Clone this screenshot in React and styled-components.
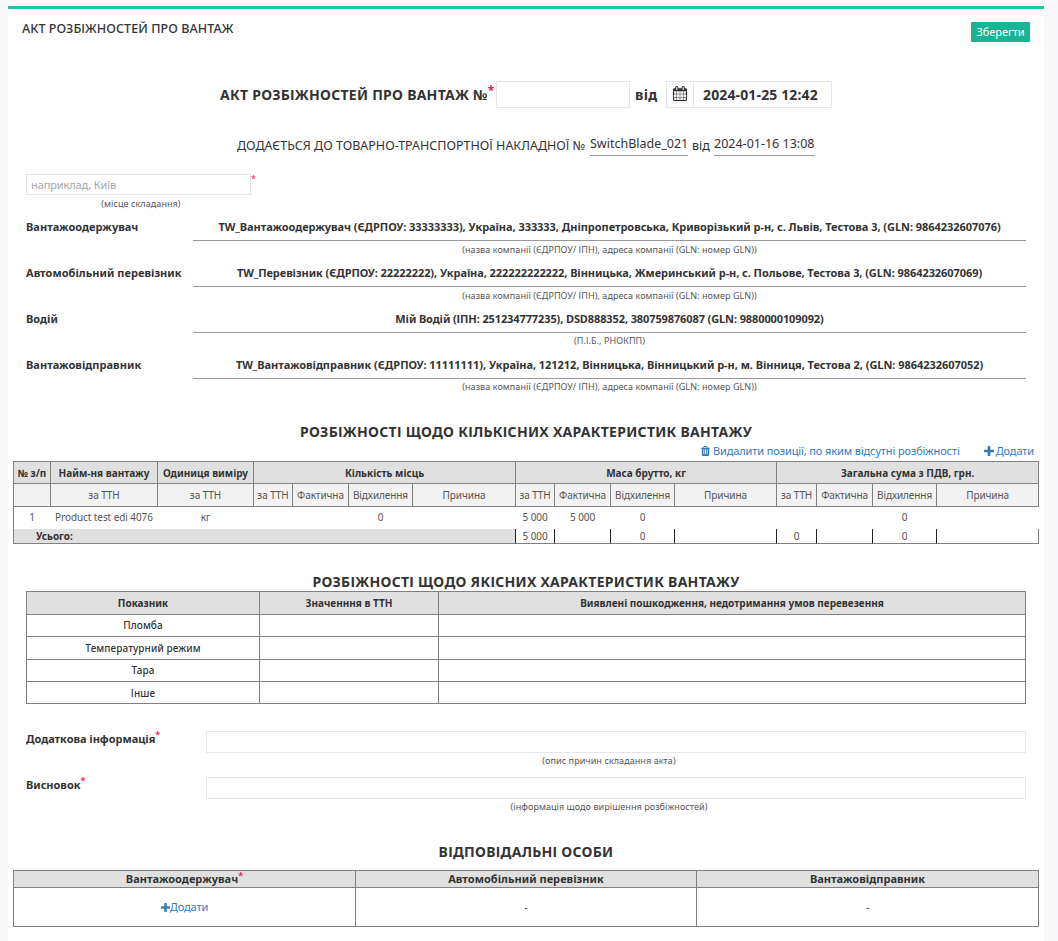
import React from "react";
import styled, { createGlobalStyle } from "styled-components";

const GlobalStyle = createGlobalStyle`
  * { box-sizing: border-box; }
  body {
    margin: 0;
    background: #f9f9fb;
    color: #333;
    font-family: "Noto Sans", "Open Sans", sans-serif;
    font-size: 11px;
  }
`;

const Page = styled.div`
  padding: 6px 14px 0 8px;
`;

const Panel = styled.main`
  height: 935px;
  background: #fff;
  border-top: 3px solid #23c6a4;
`;

const Header = styled.header`
  display: flex;
  justify-content: space-between;
  height: 72px;
  padding: 0 14px;
`;

const PageTitle = styled.h1`
  margin: 11px 0 0;
  font-size: 12.5px;
  line-height: 18px;
  font-weight: 500;
  letter-spacing: 0.08px;
`;

const SaveButton = styled.button`
  width: 59px;
  height: 20px;
  margin-top: 13px;
  padding: 0;
  border: 0;
  border-radius: 1px;
  background: #1ab394;
  color: #fff;
  font: 400 11px/20px "Noto Sans", sans-serif;
  letter-spacing: -0.05px;
`;

const ActLine = styled.div`
  display: flex;
  align-items: center;
  height: 27px;
  padding-left: 212px;
  font-size: 14px;
  font-weight: 700;
  line-height: 27px;
  white-space: nowrap;
`;

const ActLabel = styled.span`
  width: 276px;
  letter-spacing: 0.26px;
`;

const Required = styled.sup`
  color: #ed1c4f;
  font-size: ${(p) => p.$size || 9}px;
  font-weight: ${(p) => (p.$light ? 400 : 700)};
  line-height: 0;
  vertical-align: ${(p) => p.$lift ?? 5}px;
`;

const NumberInput = styled.input`
  width: 134px;
  height: 27px;
  border: 1px solid #e5e6e7;
  background: #fff;
  outline: 0;
`;

const From = styled.span`
  width: 36px;
  padding-left: 5px;
  letter-spacing: 0.3px;
`;

const DateGroup = styled.div`
  display: flex;
  width: 166px;
  height: 27px;
  border: 1px solid #e5e6e7;
  line-height: 26px;
`;

const DateAddon = styled.span`
  display: flex;
  align-items: center;
  justify-content: center;
  width: 27px;
  padding-bottom: 2px;
  border-right: 1px solid #e5e6e7;
`;

const DateValue = styled.span`
  padding-left: 9px;
  letter-spacing: 0.14px;
`;

const Waybill = styled.div`
  display: flex;
  height: 66px;
  padding: 24px 0 0 229px;
  font-size: 12.5px;
  line-height: 27px;
  white-space: nowrap;
`;

const WaybillLabel = styled.span`
  width: ${(p) => p.$width}px;
  padding-left: ${(p) => p.$inset || 0}px;
`;

const Underlined = styled.span`
  height: 24px;
  width: ${(p) => p.$width}px;
  border-bottom: 1px solid #999;
  line-height: 23px;
`;

const PlaceRow = styled.div`
  display: flex;
  height: 21px;
  padding-left: 18px;
`;

const PlaceInput = styled.input`
  width: 225px;
  height: 21px;
  padding: 0 4px;
  border: 1px solid #e5e6e7;
  outline: 0;
  font: 400 11px "Noto Sans", sans-serif;
  letter-spacing: -0.12px;
  &::placeholder { color: #a6a6a6; opacity: 1; }
`;

const PlaceMark = styled.span`
  line-height: 16px;
`;

const Caption = styled.div`
  width: ${(p) => (p.$width ? `${p.$width}px` : "auto")};
  margin-left: ${(p) => p.$left || 0}px;
  padding-top: 1px;
  color: #555;
  font-size: 9px;
  line-height: 16px;
  letter-spacing: 0.07px;
  text-align: center;
`;

const Parties = styled.section`
  height: 210px;
  padding: 4px 18px 0;
`;

const PartyRow = styled.div`
  display: flex;
  height: 46px;
  font-weight: 700;
  line-height: 22px;
`;

const PartyLabel = styled.div`
  width: 167px;
  letter-spacing: 0.03px;
`;

const PartyBody = styled.div`
  flex: 1;
`;

const PartyValue = styled.div`
  height: 25px;
  border-bottom: 1px solid #999;
  text-align: center;
  letter-spacing: ${(p) => p.$tracking}px;
`;

const PartyCaption = styled(Caption)`
  font-weight: 400;
  padding-top: ${(p) => (p.$tight ? 0 : 1)}px;
`;

const SectionTitle = styled.h2`
  margin: 0;
  height: 20px;
  font-size: 14px;
  line-height: 20px;
  font-weight: 700;
  letter-spacing: 0.28px;
  text-align: center;
`;

const Actions = styled.div`
  display: flex;
  justify-content: flex-end;
  gap: 24px;
  height: 19px;
  padding-right: 10px;
`;

const ActionLink = styled.a`
  display: inline-flex;
  align-items: center;
  gap: ${(p) => p.$gap ?? 2}px;
  height: 18px;
  color: #337ab7;
  font-size: 11px;
  line-height: 18px;
  letter-spacing: -0.12px;
`;

const Table = styled.table`
  width: ${(p) => p.$width}px;
  margin-left: ${(p) => p.$left}px;
  table-layout: fixed;
  border-spacing: 0;
  border-top: 1px solid #808080;
  border-left: 1px solid #808080;
  text-align: center;
`;

const Cell = styled.td`
  height: ${(p) => p.$h}px;
  padding: 0 0 ${(p) => p.$below || 0}px;
  border-right: 1px solid ${(p) => (p.$open ? "transparent" : p.$dark ? "#222" : "#808080")};
  border-bottom: ${(p) => (p.$open ? "0" : "1px solid #808080")};
  background: #fff;
  font-size: 10px;
  font-weight: 400;
  line-height: 12px;
  white-space: nowrap;
`;

const HeadCell = styled(Cell)`
  background: #e0e0e0;
  font-size: ${(p) => (p.$large ? 11 : 10)}px;
  font-weight: 700;
  letter-spacing: ${(p) => (p.$large ? 0.03 : 0)}px;
`;

const ValueCell = styled(Cell)`
  color: #555;
  letter-spacing: -0.08px;
`;

const SubHeadCell = styled(ValueCell)`
  background: #f2f2f2;
`;

const TotalCell = styled(HeadCell)`
  padding-left: 22px;
  text-align: left;
`;

const NameCell = styled(Cell)`
  font-weight: 500;
  letter-spacing: 0.08px;
`;

const QualityTitle = styled(SectionTitle)`
  margin-top: 28px;
  height: 19px;
`;

const Fields = styled.section`
  height: 138px;
  padding: 27px 18px 0;
`;

const FieldRow = styled.div`
  display: flex;
  height: 46px;
`;

const FieldLabel = styled.label`
  width: 180px;
  font-weight: 700;
  line-height: 16px;
  letter-spacing: -0.03px;
`;

const FieldBody = styled.div`
  flex: 1;
`;

const FieldCaption = styled(Caption)`
  margin-right: 14px;
  padding-top: 0;
`;

const FieldInput = styled.input`
  display: block;
  width: 100%;
  height: 22px;
  border: 1px solid #e5e6e7;
  outline: 0;
`;

const PersonsTitle = styled(SectionTitle)`
  height: 28px;
`;

const GlyphSvg = styled.svg`
  display: block;
  flex: none;
  fill: currentColor;
`;

const glyphs = {
  plus: {
    box: "192 128 1408 1408",
    d: "M1600 736v192q0 40-28 68t-68 28h-416v416q0 40-28 68t-68 28h-192q-40 0-68-28t-28-68v-416h-416q-40 0-68-28t-28-68v-192q0-40 28-68t68-28h416v-416q0-40 28-68t68-28h192q40 0 68 28t28 68v416h416q40 0 68 28t28 68z",
  },
  trash: {
    box: "192 128 1408 1536",
    d: "M704 1376v-704q0-14-9-23t-23-9h-64q-14 0-23 9t-9 23v704q0 14 9 23t23 9h64q14 0 23-9t9-23zm256 0v-704q0-14-9-23t-23-9h-64q-14 0-23 9t-9 23v704q0 14 9 23t23 9h64q14 0 23-9t9-23zm256 0v-704q0-14-9-23t-23-9h-64q-14 0-23 9t-9 23v704q0 14 9 23t23 9h64q14 0 23-9t9-23zm-544-992h448l-48-117q-7-9-17-11h-317q-10 2-17 11zm928 32v64q0 14-9 23t-23 9h-96v948q0 83-47 143.5t-113 60.5h-832q-66 0-113-58.5t-47-141.5v-952h-96q-14 0-23-9t-9-23v-64q0-14 9-23t23-9h309l70-167q15-37 54-63t79-26h320q40 0 79 26t54 63l70 167h309q14 0 23 9t9 23z",
  },
  calendar: {
    box: "64 0 1664 1792",
    d: "M192 1664h288v-288h-288v288zm352 0h320v-288h-320v288zm-352-352h288v-320h-288v320zm352 0h320v-320h-320v320zm-352-384h288v-288h-288v288zm736 736h320v-288h-320v288zm-384-736h320v-288h-320v288zm768 736h288v-288h-288v288zm-384-352h320v-320h-320v320zm-352-864v-288q0-13-9.5-22.5t-22.5-9.5h-64q-13 0-22.5 9.5t-9.5 22.5v288q0 13 9.5 22.5t22.5 9.5h64q13 0 22.5-9.5t9.5-22.5zm736 864h288v-320h-288v320zm-384-384h320v-288h-320v288zm384 0h288v-288h-288v288zm32-480v-288q0-13-9.5-22.5t-22.5-9.5h-64q-13 0-22.5 9.5t-9.5 22.5v288q0 13 9.5 22.5t22.5 9.5h64q13 0 22.5-9.5t9.5-22.5zm384-64v1280q0 52-38 90t-90 38h-1408q-52 0-90-38t-38-90v-1280q0-52 38-90t90-38h128v-96q0-66 47-113t113-47h64q66 0 113 47t47 113v96h384v-96q0-66 47-113t113-47h64q66 0 113 47t47 113v96h128q52 0 90 38t38 90z",
  },
};

const Glyph = ({ name, width, height }) => (
  <GlyphSvg viewBox={glyphs[name].box} width={width} height={height} aria-hidden="true">
    <path d={glyphs[name].d} />
  </GlyphSvg>
);

const companyHint = "(назва компанії (ЄДРПОУ/ ІПН), адреса компанії (GLN: номер GLN))";
const parties = [
  { label: "Вантажоодержувач", value: "TW_Вантажоодержувач (ЄДРПОУ: 33333333), Україна, 333333, Дніпропетровська, Криворізький р-н, с. Львів, Тестова 3, (GLN: 9864232607076)", hint: companyHint, tracking: -0.05 },
  { label: "Автомобільний перевізник", value: "TW_Перевізник (ЄДРПОУ: 22222222), Україна, 222222222222, Вінницька, Жмеринський р-н, с. Польове, Тестова 3, (GLN: 9864232607069)", hint: companyHint, tracking: -0.07 },
  { label: "Водій", value: "Мій Водій (ІПН: 251234777235), DSD888352, 380759876087 (GLN: 9880000109092)", hint: "(П.І.Б., РНОКПП)", tracking: -0.11, tight: true },
  { label: "Вантажовідправник", value: "TW_Вантажовідправник (ЄДРПОУ: 11111111), Україна, 121212, Вінницька, Вінницький р-н, м. Вінниця, Тестова 2, (GLN: 9864232607052)", hint: companyHint, tracking: -0.045, tight: true },
];

const quantityCols = [37, 107, 96, 39, 56, 64, 103, 39, 56, 64, 102, 40, 56, 64, 102];
const measures = ["за ТТН", "Фактична", "Відхилення", "Причина"];
const subHeads = ["", "за ТТН", "за ТТН", ...measures, ...measures, ...measures];
const itemRow = ["1", "Product test edi 4076", "кг", "", "", "0", "", "5 000", "5 000", "0", "", "", "", "0", ""];
const totals = ["5 000", "", "0", "", "0", "", "0", ""];
const qualityRows = [["Пломба", 22, 2], ["Температурний режим", 23, 0], ["Тара", 22, 2], ["Інше", 22, 0]];

const Cols = ({ widths }) => (
  <colgroup>
    {widths.map((w, i) => <col key={i} width={w} />)}
  </colgroup>
);

export default function App() {
  return (
    <Page>
      <GlobalStyle />
      <Panel>
        <Header>
          <PageTitle>АКТ РОЗБІЖНОСТЕЙ ПРО ВАНТАЖ</PageTitle>
          <SaveButton>Зберегти</SaveButton>
        </Header>

        <ActLine>
          <ActLabel>АКТ РОЗБІЖНОСТЕЙ ПРО ВАНТАЖ №<Required $size={12} $lift={5}>*</Required></ActLabel>
          <NumberInput />
          <From>від</From>
          <DateGroup>
            <DateAddon><Glyph name="calendar" width={14} height={15} /></DateAddon>
            <DateValue>2024-01-25 12:42</DateValue>
          </DateGroup>
        </ActLine>

        <Waybill>
          <WaybillLabel $width={353}>ДОДАЄТЬСЯ ДО ТОВАРНО-ТРАНСПОРТНОЇ НАКЛАДНОЇ №</WaybillLabel>
          <Underlined $width={98}>SwitchBlade_021</Underlined>
          <WaybillLabel $width={26} $inset={4}>від</WaybillLabel>
          <Underlined $width={101}>2024-01-16 13:08</Underlined>
        </Waybill>

        <PlaceRow>
          <PlaceInput placeholder="наприклад, Київ" />
          <PlaceMark><Required $size={9} $light $lift={4}>*</Required></PlaceMark>
        </PlaceRow>
        <Caption $width={230} $left={18}>(місце складання)</Caption>

        <Parties>
          {parties.map(({ label, value, hint, tracking, tight }) => (
            <PartyRow key={label}>
              <PartyLabel>{label}</PartyLabel>
              <PartyBody>
                <PartyValue $tracking={tracking}>{value}</PartyValue>
                <PartyCaption $tight={tight}>{hint}</PartyCaption>
              </PartyBody>
            </PartyRow>
          ))}
        </Parties>

        <SectionTitle>РОЗБІЖНОСТІ ЩОДО КІЛЬКІСНИХ ХАРАКТЕРИСТИК ВАНТАЖУ</SectionTitle>
        <Actions>
          <ActionLink $gap={3}><Glyph name="trash" width={9} height={10} />Видалити позиції, по яким відсутні розбіжності</ActionLink>
          <ActionLink><Glyph name="plus" width={10} height={10} />Додати</ActionLink>
        </Actions>

        <Table $width={1026} $left={5}>
          <Cols widths={quantityCols} />
          <tbody>
            <tr>
              <HeadCell as="th" $h={22}>№ з/п</HeadCell>
              <HeadCell as="th" $h={22}>Найм-ня вантажу</HeadCell>
              <HeadCell as="th" $h={22}>Одиниця виміру</HeadCell>
              <HeadCell as="th" $h={22} colSpan={4}>Кількість місць</HeadCell>
              <HeadCell as="th" $h={22} colSpan={4}>Маса брутто, кг</HeadCell>
              <HeadCell as="th" $h={22} colSpan={4}>Загальна сума з ПДВ, грн.</HeadCell>
            </tr>
            <tr>
              {subHeads.map((t, i) => <SubHeadCell key={i} $h={23}>{t}</SubHeadCell>)}
            </tr>
            <tr>
              {itemRow.map((t, i) => <ValueCell key={i} $h={22} $below={2} $open>{t}</ValueCell>)}
            </tr>
            <tr>
              <TotalCell $h={15} colSpan={7} $dark>Усього:</TotalCell>
              {totals.map((t, i) => <ValueCell key={i} $h={15} $dark={i < 7}>{t}</ValueCell>)}
            </tr>
          </tbody>
        </Table>

        <QualityTitle>РОЗБІЖНОСТІ ЩОДО ЯКІСНИХ ХАРАКТЕРИСТИК ВАНТАЖУ</QualityTitle>
        <Table $width={1000} $left={18}>
          <Cols widths={[233, 179, 587]} />
          <tbody>
            <tr>
              <HeadCell as="th" $h={23}>Показник</HeadCell>
              <HeadCell as="th" $h={23}>Значенння в ТТН</HeadCell>
              <HeadCell as="th" $h={23}>Виявлені пошкодження, недотримання умов перевезення</HeadCell>
            </tr>
            {qualityRows.map(([name, h, below]) => (
              <tr key={name}>
                <NameCell $h={h} $below={below}>{name}</NameCell>
                <Cell $h={h} />
                <Cell $h={h} />
              </tr>
            ))}
          </tbody>
        </Table>

        <Fields>
          <FieldRow>
            <FieldLabel>Додаткова інформація<Required>*</Required></FieldLabel>
            <FieldBody>
              <FieldInput />
              <FieldCaption>(опис причин складання акта)</FieldCaption>
            </FieldBody>
          </FieldRow>
          <FieldRow>
            <FieldLabel>Висновок<Required>*</Required></FieldLabel>
            <FieldBody>
              <FieldInput />
              <FieldCaption>(інформація щодо вирішення розбіжностей)</FieldCaption>
            </FieldBody>
          </FieldRow>
        </Fields>

        <PersonsTitle>ВІДПОВІДАЛЬНІ ОСОБИ</PersonsTitle>
        <Table $width={1026} $left={5}>
          <Cols widths={[342, 341, 342]} />
          <tbody>
            <tr>
              <HeadCell as="th" $h={17} $large>Вантажоодержувач<Required $lift={4}>*</Required></HeadCell>
              <HeadCell as="th" $h={17} $large>Автомобільний перевізник</HeadCell>
              <HeadCell as="th" $h={17} $large>Вантажовідправник</HeadCell>
            </tr>
            <tr>
              <Cell $h={39}><ActionLink $gap={0}><Glyph name="plus" width={9} height={9} />Додати</ActionLink></Cell>
              <Cell $h={39}>-</Cell>
              <Cell $h={39}>-</Cell>
            </tr>
          </tbody>
        </Table>
      </Panel>
    </Page>
  );
}
